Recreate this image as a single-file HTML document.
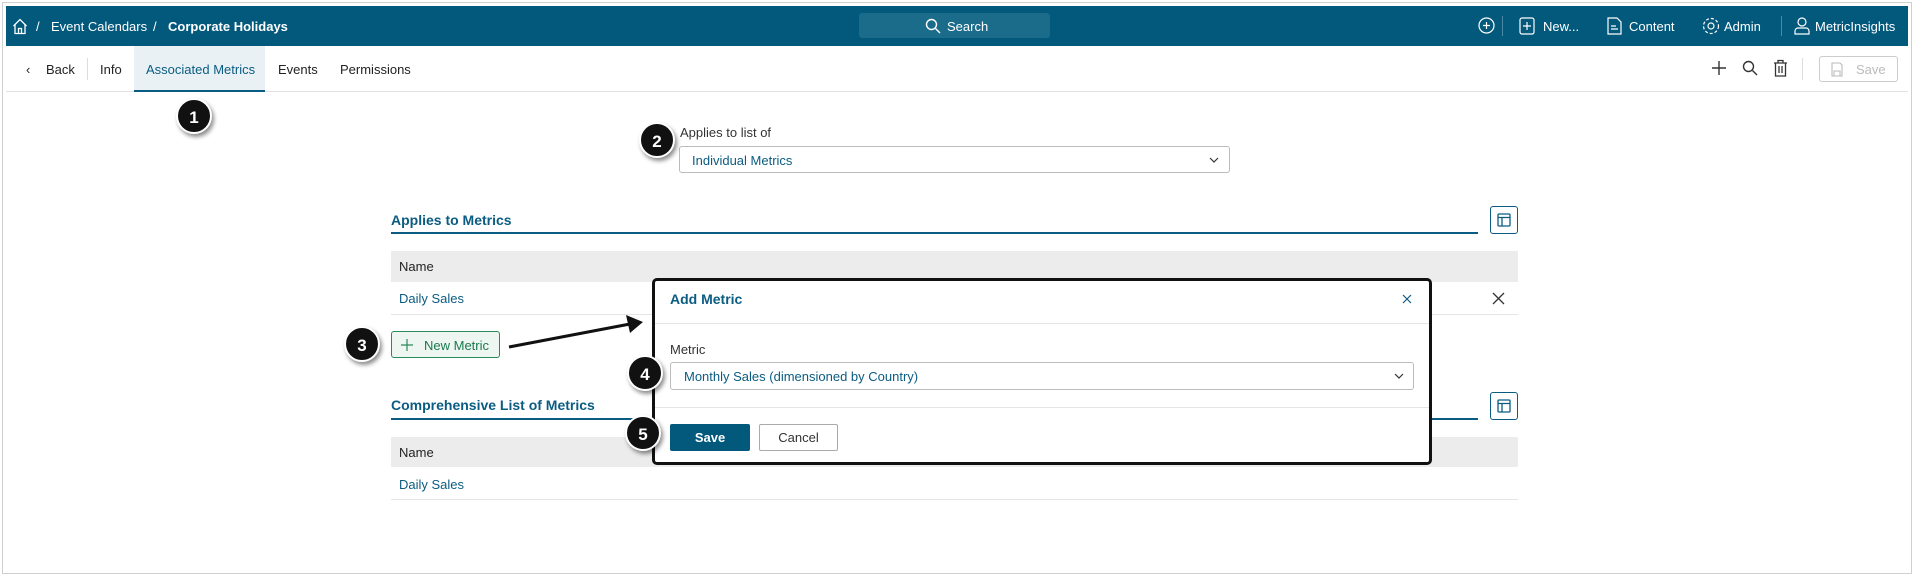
<!DOCTYPE html>
<html><head><meta charset="utf-8"><style>
*{box-sizing:border-box;margin:0;padding:0}
body{width:1914px;height:576px;background:#fff;font-family:"Liberation Sans",sans-serif;position:relative;overflow:hidden;font-size:13px;color:#222}
.a{position:absolute}
.frame{left:2px;top:2px;width:1910px;height:572px;border:1px solid #d0d0d0}
.hdr{left:6px;top:6px;width:1902px;height:40px;background:#02597c;color:#fff;font-size:13px}
.hdr .t{position:absolute;top:13px;white-space:nowrap}
.circ{width:36px;height:36px;border-radius:50%;background:#111;color:#fff;font-weight:bold;font-size:17px;text-align:center;line-height:36px;box-shadow:2px 3px 4px rgba(0,0,0,.45);border:2px solid #fff}
.lnk{color:#0b5c82}
.h2{font-weight:bold;color:#0b5c82;font-size:14px}
.uline{height:2px;background:#0b5c82}
.th{background:#ececec;color:#333}
.ib{width:28px;height:28px;border:1px solid #0b5c82;border-radius:3px;background:#fff}
</style></head><body>
<div class="a frame"></div>
<div class="a hdr">
 <svg class="a" style="left:6px;top:12px" width="16" height="17" viewBox="0 0 16 17" fill="none" stroke="#fff" stroke-width="1.3"><path d="M1.5 8 L8 1.5 L14.5 8 M3 6.5 V15.5 H13 V6.5 M6.5 15.5 V10.5 H9.5 V15.5"/></svg>
 <span class="t" style="left:30px">/</span>
 <span class="t" style="left:45px">Event Calendars</span>
 <span class="t" style="left:147px">/</span>
 <span class="t" style="left:162px;font-weight:bold">Corporate Holidays</span>
 <div class="a" style="left:853px;top:7px;width:191px;height:25px;background:#1b6b8b;border-radius:3px"></div>
 <svg class="a" style="left:919px;top:12px" width="16" height="16" viewBox="0 0 16 16" fill="none" stroke="#fff" stroke-width="1.4"><circle cx="6.5" cy="6.5" r="5"/><path d="M10.5 10.5 L15 15"/></svg>
 <span class="t" style="left:941px">Search</span>
 <svg class="a" style="left:1472px;top:11px" width="17" height="17" viewBox="0 0 17 17" fill="none" stroke="#fff" stroke-width="1.2"><circle cx="8.5" cy="8.5" r="7.5"/><path d="M8.5 5v7M5 8.5h7"/></svg>
 <div class="a" style="left:1496px;top:10px;width:1px;height:20px;background:#4a8aa6"></div>
 <svg class="a" style="left:1513px;top:11px" width="16" height="18" viewBox="0 0 16 18" fill="none" stroke="#fff" stroke-width="1.2"><rect x="1" y="1" width="14" height="16" rx="2"/><path d="M8 5v8M4 9h8"/></svg>
 <span class="t" style="left:1537px">New...</span>
 <svg class="a" style="left:1601px;top:11px" width="15" height="18" viewBox="0 0 15 18" fill="none" stroke="#fff" stroke-width="1.2"><path d="M1 1h9l4 4v12H1z M4 9h5M4 12h7"/></svg>
 <span class="t" style="left:1623px">Content</span>
 <svg class="a" style="left:1696px;top:11px" width="18" height="18" viewBox="0 0 18 18" fill="none" stroke="#fff" stroke-width="1.2"><circle cx="9" cy="9" r="3"/><circle cx="9" cy="9" r="7.5" stroke-dasharray="3 2"/></svg>
 <span class="t" style="left:1718px">Admin</span>
 <div class="a" style="left:1775px;top:10px;width:1px;height:20px;background:#4a8aa6"></div>
 <svg class="a" style="left:1788px;top:11px" width="16" height="18" viewBox="0 0 16 18" fill="none" stroke="#fff" stroke-width="1.2"><circle cx="8" cy="5" r="4"/><path d="M1 17v-3a3 3 0 0 1 3-3h8a3 3 0 0 1 3 3v3z"/></svg>
 <span class="t" style="left:1809px">MetricInsights</span>
</div>
<!-- tabs -->
<div class="a" style="left:6px;top:91px;width:1902px;height:1px;background:#e2e2e2"></div>
<div class="a" style="left:134px;top:46px;width:131px;height:46px;background:#e9f1f5;border-bottom:2px solid #0b5c82"></div>
<span class="a" style="left:26px;top:62px">&#8249;</span>
<span class="a" style="left:46px;top:62px">Back</span>
<div class="a" style="left:87px;top:58px;width:1px;height:22px;background:#ddd"></div>
<span class="a" style="left:100px;top:62px">Info</span>
<span class="a lnk" style="left:146px;top:62px">Associated Metrics</span>
<span class="a" style="left:278px;top:62px">Events</span>
<span class="a" style="left:340px;top:62px">Permissions</span>
<svg class="a" style="left:1712px;top:61px" width="14" height="14" stroke="#333" stroke-width="1.4"><path d="M7 0v14M0 7h14"/></svg>
<svg class="a" style="left:1742px;top:60px" width="16" height="16" viewBox="0 0 16 16" fill="none" stroke="#333" stroke-width="1.4"><circle cx="6.5" cy="6.5" r="5"/><path d="M10.5 10.5 L15 15"/></svg>
<svg class="a" style="left:1773px;top:59px" width="15" height="18" viewBox="0 0 15 18" fill="none" stroke="#333" stroke-width="1.3"><path d="M1 4h13M5 4V1.5h5V4M2.5 4v13h10V4M6 7v7M9 7v7"/></svg>
<div class="a" style="left:1802px;top:58px;width:1px;height:22px;background:#ddd"></div>
<div class="a" style="left:1819px;top:56px;width:79px;height:26px;border:1px solid #ccc;border-radius:3px"></div>
<svg class="a" style="left:1831px;top:62px" width="12" height="15" fill="none" stroke="#bbb" stroke-width="1.1"><path d="M1 1h8l2 2v11H1zM3 14V9h6v5"/></svg>
<span class="a" style="left:1856px;top:62px;color:#bbb">Save</span>
<div class="a circ" style="left:176px;top:98px">1</div>
<!-- applies to list -->
<span class="a" style="left:680px;top:125px;color:#333">Applies to list of</span>
<div class="a" style="left:679px;top:146px;width:551px;height:27px;border:1px solid #bbb;border-radius:3px"></div>
<span class="a lnk" style="left:692px;top:153px">Individual Metrics</span>
<svg class="a" style="left:1209px;top:157px" width="10" height="6" fill="none" stroke="#333" stroke-width="1.2"><path d="M1 1l4 4 4-4"/></svg>
<div class="a circ" style="left:639px;top:122px">2</div>
<!-- section 1 -->
<span class="a h2" style="left:391px;top:212px">Applies to Metrics</span>
<div class="a uline" style="left:391px;top:232px;width:1087px"></div>
<div class="a ib" style="left:1490px;top:206px"></div>
<svg class="a" style="left:1497px;top:213px" width="14" height="14" fill="none" stroke="#0b5c82" stroke-width="1.3"><rect x="1" y="1" width="12" height="12" rx="1"/><path d="M1 4.5h12M5 4.5v8.5"/></svg>
<div class="a th" style="left:391px;top:251px;width:1127px;height:31px"></div>
<span class="a" style="left:399px;top:259px">Name</span>
<span class="a lnk" style="left:399px;top:291px">Daily Sales</span>
<div class="a" style="left:391px;top:314px;width:1127px;height:1px;background:#e5e5e5"></div>
<svg class="a" style="left:1492px;top:292px" width="13" height="13" stroke="#333" stroke-width="1.3"><path d="M1 1l11 11M12 1L1 12"/></svg>
<div class="a" style="left:391px;top:331px;width:109px;height:27px;border:1px solid #2a8a5a;border-radius:3px;background:#eef6f1"></div>
<svg class="a" style="left:401px;top:339px" width="12" height="12" stroke="#2a8a5a" stroke-width="1.2"><path d="M6 0v12M0 6h12"/></svg>
<span class="a" style="left:424px;top:338px;color:#1a7a4e">New Metric</span>
<div class="a circ" style="left:344px;top:326px">3</div>
<svg class="a" style="left:500px;top:310px" width="150" height="45"><path d="M9 37 L130 14" stroke="#111" stroke-width="3"/><path d="M143 12 L126 5 L130 23 Z" fill="#111"/></svg>
<!-- section 2 -->
<span class="a h2" style="left:391px;top:397px">Comprehensive List of Metrics</span>
<div class="a uline" style="left:391px;top:418px;width:1087px"></div>
<div class="a ib" style="left:1490px;top:392px"></div>
<svg class="a" style="left:1497px;top:399px" width="14" height="14" fill="none" stroke="#0b5c82" stroke-width="1.3"><rect x="1" y="1" width="12" height="12" rx="1"/><path d="M1 4.5h12M5 4.5v8.5"/></svg>
<div class="a th" style="left:391px;top:437px;width:1127px;height:30px"></div>
<span class="a" style="left:399px;top:445px">Name</span>
<span class="a lnk" style="left:399px;top:477px">Daily Sales</span>
<div class="a" style="left:391px;top:499px;width:1127px;height:1px;background:#e5e5e5"></div>
<!-- modal -->
<div class="a" style="left:652px;top:278px;width:780px;height:187px;border:3px solid #111;border-radius:5px;background:#fff"></div>
<span class="a h2" style="left:670px;top:291px">Add Metric</span>
<svg class="a" style="left:1402px;top:294px" width="10" height="10" stroke="#0b5c82" stroke-width="1.2"><path d="M1 1l8 8M9 1L1 9"/></svg>
<div class="a" style="left:655px;top:323px;width:774px;height:1px;background:#e5e5e5"></div>
<span class="a" style="left:670px;top:342px;color:#333">Metric</span>
<div class="a" style="left:670px;top:362px;width:744px;height:28px;border:1px solid #bbb;border-radius:3px"></div>
<span class="a lnk" style="left:684px;top:369px">Monthly Sales (dimensioned by Country)</span>
<svg class="a" style="left:1394px;top:373px" width="10" height="6" fill="none" stroke="#333" stroke-width="1.2"><path d="M1 1l4 4 4-4"/></svg>
<div class="a" style="left:655px;top:407px;width:774px;height:1px;background:#e5e5e5"></div>
<div class="a" style="left:670px;top:424px;width:80px;height:27px;background:#02597c;border-radius:2px;color:#fff;font-weight:bold;text-align:center;line-height:27px">Save</div>
<div class="a" style="left:759px;top:424px;width:79px;height:27px;border:1px solid #aaa;border-radius:2px;text-align:center;line-height:25px;color:#333">Cancel</div>
<div class="a circ" style="left:627px;top:355px">4</div>
<div class="a circ" style="left:625px;top:415px">5</div>
</body></html>
